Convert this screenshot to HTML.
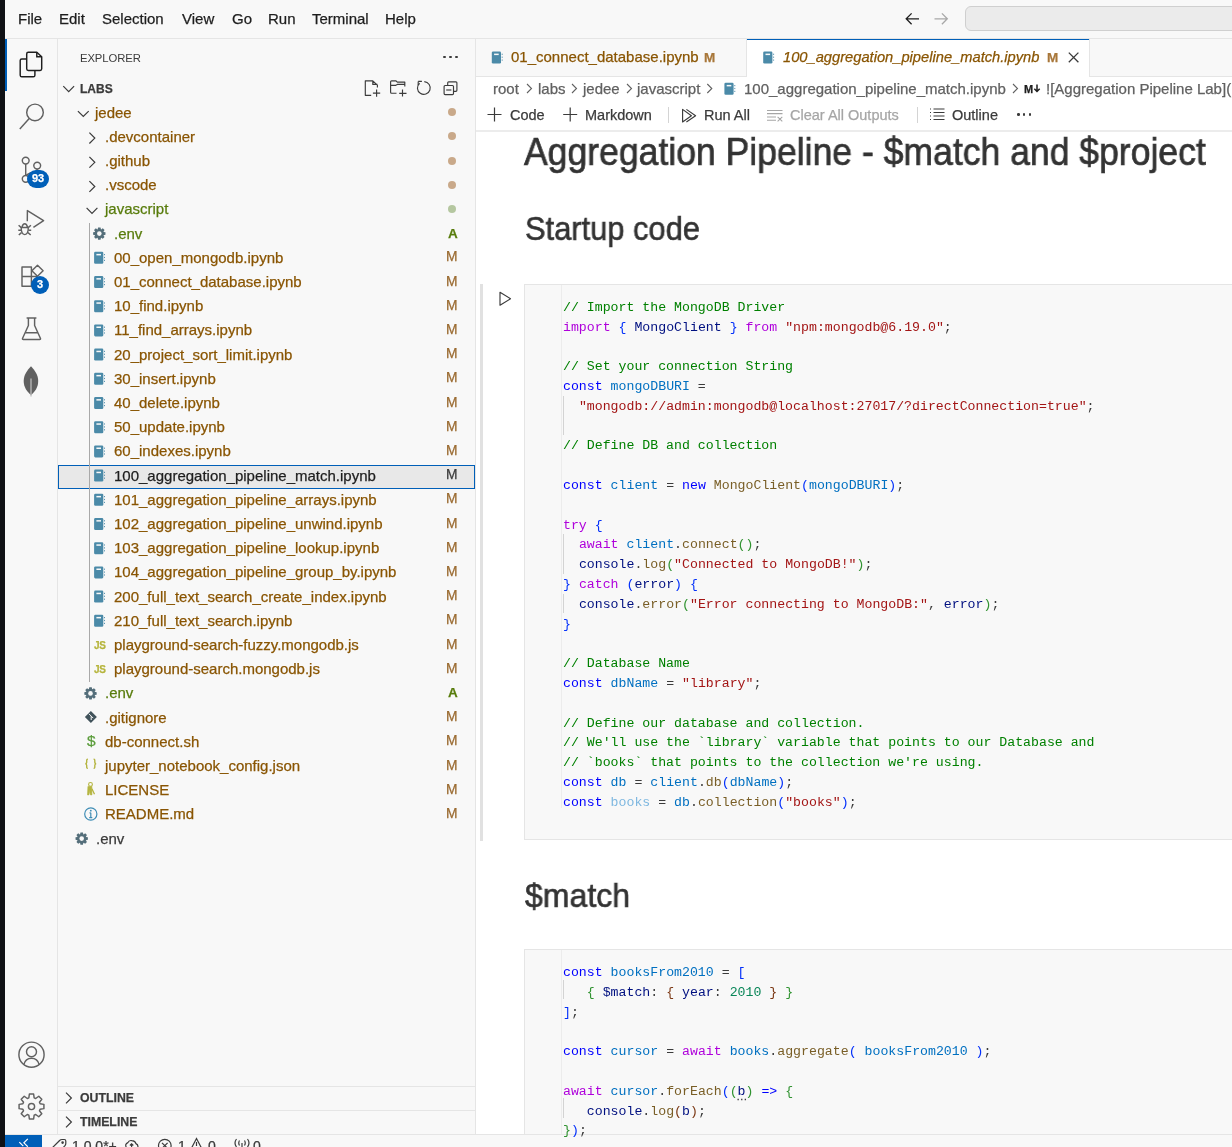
<!DOCTYPE html>
<html><head><meta charset="utf-8"><title>VS Code</title>
<style>
html,body{margin:0;padding:0;width:1232px;height:1147px;overflow:hidden;background:#fff;}
body{position:relative;font-family:'Liberation Sans', sans-serif;}
.r{position:absolute;}
.t{position:absolute;line-height:0;white-space:pre;will-change:transform;-webkit-text-stroke:0.25px currentColor;}
.m{-webkit-text-stroke:0;}
.ov{position:absolute;left:0;top:0;}
</style></head><body>

<div class="r" style="left:0px;top:0px;width:1232px;height:1147px;background:#ffffff;"></div>
<div class="r" style="left:0px;top:0px;width:1232px;height:38.5px;background:#f8f8f8;"></div>
<div class="r" style="left:0px;top:38px;width:1232px;height:1px;background:#e5e5e5;"></div>
<div class="r" style="left:0px;top:39px;width:57.5px;height:1095px;background:#f8f8f8;"></div>
<div class="r" style="left:57px;top:39px;width:1px;height:1095px;background:#e5e5e5;"></div>
<div class="r" style="left:58px;top:39px;width:417px;height:1095px;background:#f8f8f8;"></div>
<div class="r" style="left:475px;top:39px;width:1px;height:1095px;background:#e5e5e5;"></div>
<div class="r" style="left:0px;top:0px;width:5px;height:1147px;background:#0f1115;"></div>
<div class="t" style="left:18.00px;top:19.10px;font-size:15px;color:#1e1e1e;font-weight:normal;font-style:normal;font-family:'Liberation Sans', sans-serif;">File</div>
<div class="t" style="left:58.50px;top:19.10px;font-size:15px;color:#1e1e1e;font-weight:normal;font-style:normal;font-family:'Liberation Sans', sans-serif;">Edit</div>
<div class="t" style="left:102.00px;top:19.10px;font-size:15px;color:#1e1e1e;font-weight:normal;font-style:normal;font-family:'Liberation Sans', sans-serif;">Selection</div>
<div class="t" style="left:182.00px;top:19.10px;font-size:15px;color:#1e1e1e;font-weight:normal;font-style:normal;font-family:'Liberation Sans', sans-serif;">View</div>
<div class="t" style="left:231.50px;top:19.10px;font-size:15px;color:#1e1e1e;font-weight:normal;font-style:normal;font-family:'Liberation Sans', sans-serif;">Go</div>
<div class="t" style="left:267.80px;top:19.10px;font-size:15px;color:#1e1e1e;font-weight:normal;font-style:normal;font-family:'Liberation Sans', sans-serif;">Run</div>
<div class="t" style="left:312.00px;top:19.10px;font-size:15px;color:#1e1e1e;font-weight:normal;font-style:normal;font-family:'Liberation Sans', sans-serif;">Terminal</div>
<div class="t" style="left:385.20px;top:19.10px;font-size:15px;color:#1e1e1e;font-weight:normal;font-style:normal;font-family:'Liberation Sans', sans-serif;">Help</div>
<div class="r" style="left:964.5px;top:6.3px;width:300px;height:24.8px;background:#ebebeb;border:1px solid #cfcfcf;border-radius:6px;box-sizing:border-box;"></div>
<div class="r" style="left:5px;top:39px;width:2px;height:52px;background:#005fb8;"></div>
<div class="t" style="left:80.30px;top:58.08px;font-size:11.3px;color:#3b3b3b;font-weight:normal;font-style:normal;font-family:'Liberation Sans', sans-serif;-webkit-text-stroke:0;letter-spacing:-0.1px;">EXPLORER</div>
<div class="r" style="left:443.3px;top:55.8px;width:2.4px;height:2.4px;background:#3b3b3b;border-radius:1.2px;"></div>
<div class="r" style="left:449.3px;top:55.8px;width:2.4px;height:2.4px;background:#3b3b3b;border-radius:1.2px;"></div>
<div class="r" style="left:455.3px;top:55.8px;width:2.4px;height:2.4px;background:#3b3b3b;border-radius:1.2px;"></div>
<div class="t" style="left:80.30px;top:88.84px;font-size:12px;color:#3b3b3b;font-weight:bold;font-style:normal;font-family:'Liberation Sans', sans-serif;">LABS</div>
<div class="r" style="left:58px;top:464.5px;width:417px;height:24.2px;background:#e8e8e8;border:1px solid #005fb8;box-sizing:border-box;"></div>
<div class="r" style="left:89px;top:222.5px;width:1px;height:459.8px;background:#a9a9a9;"></div>
<div class="t" style="left:95.10px;top:112.60px;font-size:15px;color:#895503;font-weight:normal;font-style:normal;font-family:'Liberation Sans', sans-serif;">jedee</div>
<div class="r" style="left:447.5px;top:108.1px;width:8.2px;height:8.2px;background:#c9a98a;border-radius:4.1px;"></div>
<div class="t" style="left:104.50px;top:136.80px;font-size:15px;color:#895503;font-weight:normal;font-style:normal;font-family:'Liberation Sans', sans-serif;">.devcontainer</div>
<div class="r" style="left:447.5px;top:132.3px;width:8.2px;height:8.2px;background:#c9a98a;border-radius:4.1px;"></div>
<div class="t" style="left:104.50px;top:161.00px;font-size:15px;color:#895503;font-weight:normal;font-style:normal;font-family:'Liberation Sans', sans-serif;">.github</div>
<div class="r" style="left:447.5px;top:156.5px;width:8.2px;height:8.2px;background:#c9a98a;border-radius:4.1px;"></div>
<div class="t" style="left:104.50px;top:185.20px;font-size:15px;color:#895503;font-weight:normal;font-style:normal;font-family:'Liberation Sans', sans-serif;">.vscode</div>
<div class="r" style="left:447.5px;top:180.7px;width:8.2px;height:8.2px;background:#c9a98a;border-radius:4.1px;"></div>
<div class="t" style="left:104.50px;top:209.40px;font-size:15px;color:#587c0c;font-weight:normal;font-style:normal;font-family:'Liberation Sans', sans-serif;">javascript</div>
<div class="r" style="left:447.5px;top:204.9px;width:8.2px;height:8.2px;background:#b5c7a0;border-radius:4.1px;"></div>
<div class="t" style="left:113.90px;top:233.60px;font-size:15px;color:#587c0c;font-weight:normal;font-style:normal;font-family:'Liberation Sans', sans-serif;">.env</div>
<div class="t" style="left:447.60px;top:233.62px;font-size:13.5px;color:#587c0c;font-weight:bold;font-style:normal;font-family:'Liberation Sans', sans-serif;">A</div>
<div class="t" style="left:113.90px;top:257.80px;font-size:15px;color:#895503;font-weight:normal;font-style:normal;font-family:'Liberation Sans', sans-serif;">00_open_mongodb.ipynb</div>
<div class="t" style="left:445.80px;top:257.42px;font-size:13.8px;color:#9a6a30;font-weight:normal;font-style:normal;font-family:'Liberation Sans', sans-serif;">M</div>
<div class="t" style="left:113.90px;top:282.00px;font-size:15px;color:#895503;font-weight:normal;font-style:normal;font-family:'Liberation Sans', sans-serif;">01_connect_database.ipynb</div>
<div class="t" style="left:445.80px;top:281.62px;font-size:13.8px;color:#9a6a30;font-weight:normal;font-style:normal;font-family:'Liberation Sans', sans-serif;">M</div>
<div class="t" style="left:113.90px;top:306.20px;font-size:15px;color:#895503;font-weight:normal;font-style:normal;font-family:'Liberation Sans', sans-serif;">10_find.ipynb</div>
<div class="t" style="left:445.80px;top:305.82px;font-size:13.8px;color:#9a6a30;font-weight:normal;font-style:normal;font-family:'Liberation Sans', sans-serif;">M</div>
<div class="t" style="left:113.90px;top:330.40px;font-size:15px;color:#895503;font-weight:normal;font-style:normal;font-family:'Liberation Sans', sans-serif;">11_find_arrays.ipynb</div>
<div class="t" style="left:445.80px;top:330.02px;font-size:13.8px;color:#9a6a30;font-weight:normal;font-style:normal;font-family:'Liberation Sans', sans-serif;">M</div>
<div class="t" style="left:113.90px;top:354.60px;font-size:15px;color:#895503;font-weight:normal;font-style:normal;font-family:'Liberation Sans', sans-serif;">20_project_sort_limit.ipynb</div>
<div class="t" style="left:445.80px;top:354.22px;font-size:13.8px;color:#9a6a30;font-weight:normal;font-style:normal;font-family:'Liberation Sans', sans-serif;">M</div>
<div class="t" style="left:113.90px;top:378.80px;font-size:15px;color:#895503;font-weight:normal;font-style:normal;font-family:'Liberation Sans', sans-serif;">30_insert.ipynb</div>
<div class="t" style="left:445.80px;top:378.42px;font-size:13.8px;color:#9a6a30;font-weight:normal;font-style:normal;font-family:'Liberation Sans', sans-serif;">M</div>
<div class="t" style="left:113.90px;top:403.00px;font-size:15px;color:#895503;font-weight:normal;font-style:normal;font-family:'Liberation Sans', sans-serif;">40_delete.ipynb</div>
<div class="t" style="left:445.80px;top:402.62px;font-size:13.8px;color:#9a6a30;font-weight:normal;font-style:normal;font-family:'Liberation Sans', sans-serif;">M</div>
<div class="t" style="left:113.90px;top:427.20px;font-size:15px;color:#895503;font-weight:normal;font-style:normal;font-family:'Liberation Sans', sans-serif;">50_update.ipynb</div>
<div class="t" style="left:445.80px;top:426.82px;font-size:13.8px;color:#9a6a30;font-weight:normal;font-style:normal;font-family:'Liberation Sans', sans-serif;">M</div>
<div class="t" style="left:113.90px;top:451.40px;font-size:15px;color:#895503;font-weight:normal;font-style:normal;font-family:'Liberation Sans', sans-serif;">60_indexes.ipynb</div>
<div class="t" style="left:445.80px;top:451.02px;font-size:13.8px;color:#9a6a30;font-weight:normal;font-style:normal;font-family:'Liberation Sans', sans-serif;">M</div>
<div class="t" style="left:113.90px;top:475.60px;font-size:15px;color:#1e1e1e;font-weight:normal;font-style:normal;font-family:'Liberation Sans', sans-serif;">100_aggregation_pipeline_match.ipynb</div>
<div class="t" style="left:445.80px;top:475.22px;font-size:13.8px;color:#3b3b3b;font-weight:normal;font-style:normal;font-family:'Liberation Sans', sans-serif;">M</div>
<div class="t" style="left:113.90px;top:499.80px;font-size:15px;color:#895503;font-weight:normal;font-style:normal;font-family:'Liberation Sans', sans-serif;">101_aggregation_pipeline_arrays.ipynb</div>
<div class="t" style="left:445.80px;top:499.42px;font-size:13.8px;color:#9a6a30;font-weight:normal;font-style:normal;font-family:'Liberation Sans', sans-serif;">M</div>
<div class="t" style="left:113.90px;top:524.00px;font-size:15px;color:#895503;font-weight:normal;font-style:normal;font-family:'Liberation Sans', sans-serif;">102_aggregation_pipeline_unwind.ipynb</div>
<div class="t" style="left:445.80px;top:523.62px;font-size:13.8px;color:#9a6a30;font-weight:normal;font-style:normal;font-family:'Liberation Sans', sans-serif;">M</div>
<div class="t" style="left:113.90px;top:548.20px;font-size:15px;color:#895503;font-weight:normal;font-style:normal;font-family:'Liberation Sans', sans-serif;">103_aggregation_pipeline_lookup.ipynb</div>
<div class="t" style="left:445.80px;top:547.82px;font-size:13.8px;color:#9a6a30;font-weight:normal;font-style:normal;font-family:'Liberation Sans', sans-serif;">M</div>
<div class="t" style="left:113.90px;top:572.40px;font-size:15px;color:#895503;font-weight:normal;font-style:normal;font-family:'Liberation Sans', sans-serif;">104_aggregation_pipeline_group_by.ipynb</div>
<div class="t" style="left:445.80px;top:572.02px;font-size:13.8px;color:#9a6a30;font-weight:normal;font-style:normal;font-family:'Liberation Sans', sans-serif;">M</div>
<div class="t" style="left:113.90px;top:596.60px;font-size:15px;color:#895503;font-weight:normal;font-style:normal;font-family:'Liberation Sans', sans-serif;">200_full_text_search_create_index.ipynb</div>
<div class="t" style="left:445.80px;top:596.22px;font-size:13.8px;color:#9a6a30;font-weight:normal;font-style:normal;font-family:'Liberation Sans', sans-serif;">M</div>
<div class="t" style="left:113.90px;top:620.80px;font-size:15px;color:#895503;font-weight:normal;font-style:normal;font-family:'Liberation Sans', sans-serif;">210_full_text_search.ipynb</div>
<div class="t" style="left:445.80px;top:620.42px;font-size:13.8px;color:#9a6a30;font-weight:normal;font-style:normal;font-family:'Liberation Sans', sans-serif;">M</div>
<div class="t" style="left:93.5px;top:645.7px;font-size:10px;font-weight:bold;color:#b6b53e;font-family:'Liberation Sans', sans-serif;letter-spacing:-0.3px">JS</div>
<div class="t" style="left:113.90px;top:645.00px;font-size:15px;color:#895503;font-weight:normal;font-style:normal;font-family:'Liberation Sans', sans-serif;">playground-search-fuzzy.mongodb.js</div>
<div class="t" style="left:445.80px;top:644.62px;font-size:13.8px;color:#9a6a30;font-weight:normal;font-style:normal;font-family:'Liberation Sans', sans-serif;">M</div>
<div class="t" style="left:93.5px;top:669.9px;font-size:10px;font-weight:bold;color:#b6b53e;font-family:'Liberation Sans', sans-serif;letter-spacing:-0.3px">JS</div>
<div class="t" style="left:113.90px;top:669.20px;font-size:15px;color:#895503;font-weight:normal;font-style:normal;font-family:'Liberation Sans', sans-serif;">playground-search.mongodb.js</div>
<div class="t" style="left:445.80px;top:668.82px;font-size:13.8px;color:#9a6a30;font-weight:normal;font-style:normal;font-family:'Liberation Sans', sans-serif;">M</div>
<div class="t" style="left:104.50px;top:693.40px;font-size:15px;color:#587c0c;font-weight:normal;font-style:normal;font-family:'Liberation Sans', sans-serif;">.env</div>
<div class="t" style="left:447.60px;top:693.42px;font-size:13.5px;color:#587c0c;font-weight:bold;font-style:normal;font-family:'Liberation Sans', sans-serif;">A</div>
<div class="t" style="left:104.50px;top:717.60px;font-size:15px;color:#895503;font-weight:normal;font-style:normal;font-family:'Liberation Sans', sans-serif;">.gitignore</div>
<div class="t" style="left:445.80px;top:717.22px;font-size:13.8px;color:#9a6a30;font-weight:normal;font-style:normal;font-family:'Liberation Sans', sans-serif;">M</div>
<div class="t" style="left:87.20px;top:741.33px;font-size:15.5px;color:#5a9c3a;font-weight:normal;font-style:normal;font-family:'Liberation Sans', sans-serif;">$</div>
<div class="t" style="left:104.50px;top:741.80px;font-size:15px;color:#895503;font-weight:normal;font-style:normal;font-family:'Liberation Sans', sans-serif;">db-connect.sh</div>
<div class="t" style="left:445.80px;top:741.42px;font-size:13.8px;color:#9a6a30;font-weight:normal;font-style:normal;font-family:'Liberation Sans', sans-serif;">M</div>
<div class="t" style="left:104.50px;top:766.00px;font-size:15px;color:#895503;font-weight:normal;font-style:normal;font-family:'Liberation Sans', sans-serif;">jupyter_notebook_config.json</div>
<div class="t" style="left:445.80px;top:765.62px;font-size:13.8px;color:#9a6a30;font-weight:normal;font-style:normal;font-family:'Liberation Sans', sans-serif;">M</div>
<div class="t" style="left:104.50px;top:790.20px;font-size:15px;color:#895503;font-weight:normal;font-style:normal;font-family:'Liberation Sans', sans-serif;">LICENSE</div>
<div class="t" style="left:445.80px;top:789.82px;font-size:13.8px;color:#9a6a30;font-weight:normal;font-style:normal;font-family:'Liberation Sans', sans-serif;">M</div>
<div class="t" style="left:104.50px;top:814.40px;font-size:15px;color:#895503;font-weight:normal;font-style:normal;font-family:'Liberation Sans', sans-serif;">README.md</div>
<div class="t" style="left:445.80px;top:814.02px;font-size:13.8px;color:#9a6a30;font-weight:normal;font-style:normal;font-family:'Liberation Sans', sans-serif;">M</div>
<div class="t" style="left:96.00px;top:838.60px;font-size:15px;color:#3b3b3b;font-weight:normal;font-style:normal;font-family:'Liberation Sans', sans-serif;">.env</div>
<div class="r" style="left:58px;top:1086px;width:417px;height:1px;background:#e5e5e5;"></div>
<div class="r" style="left:58px;top:1110px;width:417px;height:1px;background:#e5e5e5;"></div>
<div class="t" style="left:80.40px;top:1097.94px;font-size:12.3px;color:#3b3b3b;font-weight:bold;font-style:normal;font-family:'Liberation Sans', sans-serif;">OUTLINE</div>
<div class="t" style="left:80.40px;top:1122.14px;font-size:12.3px;color:#3b3b3b;font-weight:bold;font-style:normal;font-family:'Liberation Sans', sans-serif;">TIMELINE</div>
<div class="r" style="left:476px;top:39px;width:756px;height:38px;background:#f8f8f8;"></div>
<div class="r" style="left:476px;top:76px;width:756px;height:1px;background:#e5e5e5;"></div>
<div class="r" style="left:476px;top:39px;width:270px;height:37px;background:#f8f8f8;"></div>
<div class="r" style="left:746px;top:39px;width:1px;height:38px;background:#e5e5e5;"></div>
<div class="r" style="left:747px;top:39px;width:342px;height:38px;background:#ffffff;"></div>
<div class="r" style="left:747px;top:39px;width:342px;height:1.2px;background:#005fb8;"></div>
<div class="r" style="left:1089px;top:39px;width:1px;height:38px;background:#e5e5e5;"></div>
<div class="t" style="left:511.40px;top:57.10px;font-size:15px;color:#895503;font-weight:normal;font-style:normal;font-family:'Liberation Sans', sans-serif;">01_connect_database.ipynb</div>
<div class="t" style="left:704.30px;top:57.62px;font-size:13.5px;color:#a8773a;font-weight:bold;font-style:normal;font-family:'Liberation Sans', sans-serif;">M</div>
<div class="t" style="left:783.20px;top:57.21px;font-size:14.7px;color:#895503;font-weight:normal;font-style:italic;font-family:'Liberation Sans', sans-serif;">100_aggregation_pipeline_match.ipynb</div>
<div class="t" style="left:1046.60px;top:57.62px;font-size:13.5px;color:#a8773a;font-weight:bold;font-style:normal;font-family:'Liberation Sans', sans-serif;">M</div>
<div class="t" style="left:493.30px;top:88.60px;font-size:15px;color:#616161;font-weight:normal;font-style:normal;font-family:'Liberation Sans', sans-serif;">root</div>
<div class="t" style="left:537.80px;top:88.60px;font-size:15px;color:#616161;font-weight:normal;font-style:normal;font-family:'Liberation Sans', sans-serif;">labs</div>
<div class="t" style="left:582.80px;top:88.60px;font-size:15px;color:#616161;font-weight:normal;font-style:normal;font-family:'Liberation Sans', sans-serif;">jedee</div>
<div class="t" style="left:636.50px;top:88.60px;font-size:15px;color:#616161;font-weight:normal;font-style:normal;font-family:'Liberation Sans', sans-serif;">javascript</div>
<div class="t" style="left:743.50px;top:88.60px;font-size:15px;color:#616161;font-weight:normal;font-style:normal;font-family:'Liberation Sans', sans-serif;">100_aggregation_pipeline_match.ipynb</div>
<div class="t" style="left:1024.00px;top:89.49px;font-size:11px;color:#1e1e1e;font-weight:bold;font-style:normal;font-family:'Liberation Sans', sans-serif;">M</div>
<div class="t" style="left:1045.50px;top:88.60px;font-size:15px;color:#616161;font-weight:normal;font-style:normal;font-family:'Liberation Sans', sans-serif;">![Aggregation Pipeline Lab](</div>
<div class="t" style="left:510.20px;top:114.98px;font-size:14.5px;color:#3b3b3b;font-weight:normal;font-style:normal;font-family:'Liberation Sans', sans-serif;">Code</div>
<div class="t" style="left:584.60px;top:114.98px;font-size:14.5px;color:#3b3b3b;font-weight:normal;font-style:normal;font-family:'Liberation Sans', sans-serif;">Markdown</div>
<div class="r" style="left:668px;top:107px;width:1px;height:16px;background:#d4d4d4;"></div>
<div class="t" style="left:703.50px;top:114.98px;font-size:14.5px;color:#3b3b3b;font-weight:normal;font-style:normal;font-family:'Liberation Sans', sans-serif;">Run All</div>
<div class="t" style="left:789.50px;top:114.98px;font-size:14.5px;color:#a6a6a6;font-weight:normal;font-style:normal;font-family:'Liberation Sans', sans-serif;">Clear All Outputs</div>
<div class="r" style="left:916.5px;top:107px;width:1px;height:16px;background:#d4d4d4;"></div>
<div class="t" style="left:952.20px;top:114.98px;font-size:14.5px;color:#3b3b3b;font-weight:normal;font-style:normal;font-family:'Liberation Sans', sans-serif;">Outline</div>
<div class="r" style="left:1017.3px;top:113.4px;width:2.4px;height:2.4px;background:#3b3b3b;border-radius:1.2px;"></div>
<div class="r" style="left:1023.0px;top:113.4px;width:2.4px;height:2.4px;background:#3b3b3b;border-radius:1.2px;"></div>
<div class="r" style="left:1028.7px;top:113.4px;width:2.4px;height:2.4px;background:#3b3b3b;border-radius:1.2px;"></div>
<div class="r" style="left:476px;top:130px;width:756px;height:1.5px;background:#ececec;"></div>
<div class="t" style="left:524.20px;top:151.93px;font-size:38px;color:#333333;font-weight:normal;font-style:normal;font-family:'Liberation Sans', sans-serif;transform:scaleX(0.9355);transform-origin:0 0;-webkit-text-stroke:0.7px currentColor;">Aggregation Pipeline - $match and $project</div>
<div class="t" style="left:524.50px;top:229.47px;font-size:33px;color:#333333;font-weight:normal;font-style:normal;font-family:'Liberation Sans', sans-serif;transform:scaleX(0.935);transform-origin:0 0;-webkit-text-stroke:0.6px currentColor;">Startup code</div>
<div class="t" style="left:524.80px;top:896.07px;font-size:33px;color:#333333;font-weight:normal;font-style:normal;font-family:'Liberation Sans', sans-serif;transform:scaleX(0.972);transform-origin:0 0;-webkit-text-stroke:0.6px currentColor;">$match</div>
<div class="r" style="left:524.4px;top:284px;width:720px;height:556px;background:#f8f8f8;border:1px solid #e5e5e5;box-sizing:border-box;"></div>
<div class="r" style="left:480px;top:284px;width:3px;height:557px;background:#e1e1e1;"></div>
<div class="r" style="left:561px;top:285px;width:1px;height:523px;background:#ececec;"></div>
<div class="r" style="left:524.4px;top:949px;width:720px;height:200px;background:#f8f8f8;border:1px solid #e5e5e5;box-sizing:border-box;"></div>
<div class="r" style="left:561px;top:950px;width:1px;height:190px;background:#ececec;"></div>
<div class="r" style="left:0px;top:1134px;width:1232px;height:13px;background:#f8f8f8;"></div>
<div class="r" style="left:0px;top:1134px;width:1232px;height:1px;background:#e5e5e5;"></div>
<div class="r" style="left:0px;top:1134px;width:5px;height:13px;background:#0f1115;"></div>
<div class="r" style="left:5px;top:1135px;width:37px;height:12px;background:#005fb8;"></div>
<div class="t" style="left:71.60px;top:1145.65px;font-size:14px;color:#3b3b3b;font-weight:normal;font-style:normal;font-family:'Liberation Sans', sans-serif;">1.0.0*+</div>
<div class="t" style="left:178.00px;top:1145.65px;font-size:14px;color:#3b3b3b;font-weight:normal;font-style:normal;font-family:'Liberation Sans', sans-serif;">1</div>
<div class="t" style="left:208.00px;top:1145.65px;font-size:14px;color:#3b3b3b;font-weight:normal;font-style:normal;font-family:'Liberation Sans', sans-serif;">0</div>
<div class="t" style="left:253.40px;top:1145.65px;font-size:14px;color:#3b3b3b;font-weight:normal;font-style:normal;font-family:'Liberation Sans', sans-serif;">0</div>
<div class="t m" style="left:562.70px;top:307.78px;font-size:13.23px;color:#3b3b3b;font-weight:normal;font-style:normal;font-family:'Liberation Mono', monospace;white-space:pre;"><span style="color:#008000">// Import the MongoDB Driver</span></div>
<div class="t m" style="left:562.70px;top:327.58px;font-size:13.23px;color:#3b3b3b;font-weight:normal;font-style:normal;font-family:'Liberation Mono', monospace;white-space:pre;"><span style="color:#af00db">import</span><span style="color:#3b3b3b"> </span><span style="color:#0431fa">{</span><span style="color:#3b3b3b"> </span><span style="color:#001080">MongoClient</span><span style="color:#3b3b3b"> </span><span style="color:#0431fa">}</span><span style="color:#3b3b3b"> </span><span style="color:#af00db">from</span><span style="color:#3b3b3b"> </span><span style="color:#a31515">&quot;npm:mongodb@6.19.0&quot;</span><span style="color:#3b3b3b">;</span></div>
<div class="t m" style="left:562.70px;top:367.18px;font-size:13.23px;color:#3b3b3b;font-weight:normal;font-style:normal;font-family:'Liberation Mono', monospace;white-space:pre;"><span style="color:#008000">// Set your connection String</span></div>
<div class="t m" style="left:562.70px;top:386.98px;font-size:13.23px;color:#3b3b3b;font-weight:normal;font-style:normal;font-family:'Liberation Mono', monospace;white-space:pre;"><span style="color:#0000ff">const</span><span style="color:#3b3b3b"> </span><span style="color:#0070c1">mongoDBURI</span><span style="color:#3b3b3b"> =</span></div>
<div class="t m" style="left:562.70px;top:406.78px;font-size:13.23px;color:#3b3b3b;font-weight:normal;font-style:normal;font-family:'Liberation Mono', monospace;white-space:pre;"><span style="color:#3b3b3b">  </span><span style="color:#a31515">&quot;mongodb://admin:mongodb@localhost:27017/?directConnection=true&quot;</span><span style="color:#3b3b3b">;</span></div>
<div class="t m" style="left:562.70px;top:446.38px;font-size:13.23px;color:#3b3b3b;font-weight:normal;font-style:normal;font-family:'Liberation Mono', monospace;white-space:pre;"><span style="color:#008000">// Define DB and collection</span></div>
<div class="t m" style="left:562.70px;top:485.98px;font-size:13.23px;color:#3b3b3b;font-weight:normal;font-style:normal;font-family:'Liberation Mono', monospace;white-space:pre;"><span style="color:#0000ff">const</span><span style="color:#3b3b3b"> </span><span style="color:#0070c1">client</span><span style="color:#3b3b3b"> = </span><span style="color:#0000ff">new</span><span style="color:#3b3b3b"> </span><span style="color:#795e26">MongoClient</span><span style="color:#0431fa">(</span><span style="color:#0070c1">mongoDBURI</span><span style="color:#0431fa">)</span><span style="color:#3b3b3b">;</span></div>
<div class="t m" style="left:562.70px;top:525.58px;font-size:13.23px;color:#3b3b3b;font-weight:normal;font-style:normal;font-family:'Liberation Mono', monospace;white-space:pre;"><span style="color:#af00db">try</span><span style="color:#3b3b3b"> </span><span style="color:#0431fa">{</span></div>
<div class="t m" style="left:562.70px;top:545.38px;font-size:13.23px;color:#3b3b3b;font-weight:normal;font-style:normal;font-family:'Liberation Mono', monospace;white-space:pre;"><span style="color:#3b3b3b">  </span><span style="color:#af00db">await</span><span style="color:#3b3b3b"> </span><span style="color:#0070c1">client</span><span style="color:#3b3b3b">.</span><span style="color:#795e26">connect</span><span style="color:#319331">()</span><span style="color:#3b3b3b">;</span></div>
<div class="t m" style="left:562.70px;top:565.18px;font-size:13.23px;color:#3b3b3b;font-weight:normal;font-style:normal;font-family:'Liberation Mono', monospace;white-space:pre;"><span style="color:#3b3b3b">  </span><span style="color:#001080">console</span><span style="color:#3b3b3b">.</span><span style="color:#795e26">log</span><span style="color:#319331">(</span><span style="color:#a31515">&quot;Connected to MongoDB!&quot;</span><span style="color:#319331">)</span><span style="color:#3b3b3b">;</span></div>
<div class="t m" style="left:562.70px;top:584.98px;font-size:13.23px;color:#3b3b3b;font-weight:normal;font-style:normal;font-family:'Liberation Mono', monospace;white-space:pre;"><span style="color:#0431fa">}</span><span style="color:#3b3b3b"> </span><span style="color:#af00db">catch</span><span style="color:#3b3b3b"> </span><span style="color:#0431fa">(</span><span style="color:#001080">error</span><span style="color:#0431fa">)</span><span style="color:#3b3b3b"> </span><span style="color:#0431fa">{</span></div>
<div class="t m" style="left:562.70px;top:604.78px;font-size:13.23px;color:#3b3b3b;font-weight:normal;font-style:normal;font-family:'Liberation Mono', monospace;white-space:pre;"><span style="color:#3b3b3b">  </span><span style="color:#001080">console</span><span style="color:#3b3b3b">.</span><span style="color:#795e26">error</span><span style="color:#319331">(</span><span style="color:#a31515">&quot;Error connecting to MongoDB:&quot;</span><span style="color:#3b3b3b">, </span><span style="color:#001080">error</span><span style="color:#319331">)</span><span style="color:#3b3b3b">;</span></div>
<div class="t m" style="left:562.70px;top:624.58px;font-size:13.23px;color:#3b3b3b;font-weight:normal;font-style:normal;font-family:'Liberation Mono', monospace;white-space:pre;"><span style="color:#0431fa">}</span></div>
<div class="t m" style="left:562.70px;top:664.18px;font-size:13.23px;color:#3b3b3b;font-weight:normal;font-style:normal;font-family:'Liberation Mono', monospace;white-space:pre;"><span style="color:#008000">// Database Name</span></div>
<div class="t m" style="left:562.70px;top:683.98px;font-size:13.23px;color:#3b3b3b;font-weight:normal;font-style:normal;font-family:'Liberation Mono', monospace;white-space:pre;"><span style="color:#0000ff">const</span><span style="color:#3b3b3b"> </span><span style="color:#0070c1">dbName</span><span style="color:#3b3b3b"> = </span><span style="color:#a31515">&quot;library&quot;</span><span style="color:#3b3b3b">;</span></div>
<div class="t m" style="left:562.70px;top:723.58px;font-size:13.23px;color:#3b3b3b;font-weight:normal;font-style:normal;font-family:'Liberation Mono', monospace;white-space:pre;"><span style="color:#008000">// Define our database and collection.</span></div>
<div class="t m" style="left:562.70px;top:743.38px;font-size:13.23px;color:#3b3b3b;font-weight:normal;font-style:normal;font-family:'Liberation Mono', monospace;white-space:pre;"><span style="color:#008000">// We&#x27;ll use the `library` variable that points to our Database and</span></div>
<div class="t m" style="left:562.70px;top:763.18px;font-size:13.23px;color:#3b3b3b;font-weight:normal;font-style:normal;font-family:'Liberation Mono', monospace;white-space:pre;"><span style="color:#008000">// `books` that points to the collection we&#x27;re using.</span></div>
<div class="t m" style="left:562.70px;top:782.98px;font-size:13.23px;color:#3b3b3b;font-weight:normal;font-style:normal;font-family:'Liberation Mono', monospace;white-space:pre;"><span style="color:#0000ff">const</span><span style="color:#3b3b3b"> </span><span style="color:#0070c1">db</span><span style="color:#3b3b3b"> = </span><span style="color:#0070c1">client</span><span style="color:#3b3b3b">.</span><span style="color:#795e26">db</span><span style="color:#0431fa">(</span><span style="color:#0070c1">dbName</span><span style="color:#0431fa">)</span><span style="color:#3b3b3b">;</span></div>
<div class="t m" style="left:562.70px;top:802.78px;font-size:13.23px;color:#3b3b3b;font-weight:normal;font-style:normal;font-family:'Liberation Mono', monospace;white-space:pre;"><span style="color:#0000ff">const</span><span style="color:#3b3b3b"> </span><span style="color:#7fb8e0">books</span><span style="color:#3b3b3b"> = </span><span style="color:#0070c1">db</span><span style="color:#3b3b3b">.</span><span style="color:#795e26">collection</span><span style="color:#0431fa">(</span><span style="color:#a31515">&quot;books&quot;</span><span style="color:#0431fa">)</span><span style="color:#3b3b3b">;</span></div>
<div class="t m" style="left:562.70px;top:972.98px;font-size:13.23px;color:#3b3b3b;font-weight:normal;font-style:normal;font-family:'Liberation Mono', monospace;white-space:pre;"><span style="color:#0000ff">const</span><span style="color:#3b3b3b"> </span><span style="color:#0070c1">booksFrom2010</span><span style="color:#3b3b3b"> = </span><span style="color:#0431fa">[</span></div>
<div class="t m" style="left:562.70px;top:992.78px;font-size:13.23px;color:#3b3b3b;font-weight:normal;font-style:normal;font-family:'Liberation Mono', monospace;white-space:pre;"><span style="color:#3b3b3b">   </span><span style="color:#319331">{</span><span style="color:#3b3b3b"> </span><span style="color:#001080">$match</span><span style="color:#3b3b3b">: </span><span style="color:#7b3814">{</span><span style="color:#3b3b3b"> </span><span style="color:#001080">year</span><span style="color:#3b3b3b">: </span><span style="color:#098658">2010</span><span style="color:#3b3b3b"> </span><span style="color:#7b3814">}</span><span style="color:#3b3b3b"> </span><span style="color:#319331">}</span></div>
<div class="t m" style="left:562.70px;top:1012.58px;font-size:13.23px;color:#3b3b3b;font-weight:normal;font-style:normal;font-family:'Liberation Mono', monospace;white-space:pre;"><span style="color:#0431fa">]</span><span style="color:#3b3b3b">;</span></div>
<div class="t m" style="left:562.70px;top:1052.18px;font-size:13.23px;color:#3b3b3b;font-weight:normal;font-style:normal;font-family:'Liberation Mono', monospace;white-space:pre;"><span style="color:#0000ff">const</span><span style="color:#3b3b3b"> </span><span style="color:#0070c1">cursor</span><span style="color:#3b3b3b"> = </span><span style="color:#af00db">await</span><span style="color:#3b3b3b"> </span><span style="color:#0070c1">books</span><span style="color:#3b3b3b">.</span><span style="color:#795e26">aggregate</span><span style="color:#0431fa">(</span><span style="color:#3b3b3b"> </span><span style="color:#0070c1">booksFrom2010</span><span style="color:#3b3b3b"> </span><span style="color:#0431fa">)</span><span style="color:#3b3b3b">;</span></div>
<div class="t m" style="left:562.70px;top:1091.78px;font-size:13.23px;color:#3b3b3b;font-weight:normal;font-style:normal;font-family:'Liberation Mono', monospace;white-space:pre;"><span style="color:#af00db">await</span><span style="color:#3b3b3b"> </span><span style="color:#0070c1">cursor</span><span style="color:#3b3b3b">.</span><span style="color:#795e26">forEach</span><span style="color:#0431fa">(</span><span style="color:#319331">(</span><span style="color:#001080">b</span><span style="color:#319331">)</span><span style="color:#3b3b3b"> </span><span style="color:#0000ff">=&gt;</span><span style="color:#3b3b3b"> </span><span style="color:#319331">{</span></div>
<div class="t m" style="left:562.70px;top:1111.58px;font-size:13.23px;color:#3b3b3b;font-weight:normal;font-style:normal;font-family:'Liberation Mono', monospace;white-space:pre;"><span style="color:#3b3b3b">   </span><span style="color:#001080">console</span><span style="color:#3b3b3b">.</span><span style="color:#795e26">log</span><span style="color:#7b3814">(</span><span style="color:#001080">b</span><span style="color:#7b3814">)</span><span style="color:#3b3b3b">;</span></div>
<div class="t m" style="left:562.70px;top:1131.38px;font-size:13.23px;color:#3b3b3b;font-weight:normal;font-style:normal;font-family:'Liberation Mono', monospace;white-space:pre;"><span style="color:#319331">}</span><span style="color:#0431fa">)</span><span style="color:#3b3b3b">;</span></div>
<div class="r" style="left:562.5px;top:395.5px;width:1px;height:39.6px;background:#d3d3d3;"></div>
<div class="r" style="left:562.5px;top:534.1px;width:1px;height:39.6px;background:#d3d3d3;"></div>
<div class="r" style="left:562.5px;top:593.5px;width:1px;height:19.8px;background:#d3d3d3;"></div>
<div class="r" style="left:562.5px;top:979.5px;width:1px;height:19.8px;background:#d3d3d3;"></div>
<div class="r" style="left:562.5px;top:1098.3px;width:1px;height:19.8px;background:#d3d3d3;"></div>
<svg class="ov" width="1232" height="1147" viewBox="0 0 1232 1147"><path d="M919 18.8H906.3M911.6 13.4L906.2 18.8L911.6 24.2" stroke="#1e1e1e" stroke-width="1.3" fill="none"/><path d="M934.5 18.8H947.2M941.9 13.4L947.3 18.8L941.9 24.2" stroke="#a8a8a8" stroke-width="1.3" fill="none"/><g stroke="#1e1e1e" stroke-width="1.45" fill="none" stroke-linejoin="round"><path d="M26.7 59H21.8Q20.2 59 20.2 60.6V75.2Q20.2 76.8 21.8 76.8H33.3Q34.9 76.8 34.9 75.2V70.4"/><path d="M28.3 52.3H36.8L41.7 56.8V68.8Q41.7 70.4 40.1 70.4H28.3Q26.7 70.4 26.7 68.8V53.9Q26.7 52.3 28.3 52.3Z"/><path d="M36.8 52.3V56.8H41.7" stroke-linejoin="miter"/></g><g stroke="#616161" stroke-width="1.45" fill="none"><circle cx="35" cy="112.4" r="8.3"/><path d="M29.2 118.4L19.8 129"/></g><g stroke="#616161" stroke-width="1.45" fill="none"><circle cx="25.7" cy="160.6" r="3.4"/><circle cx="37.2" cy="165.6" r="3.4"/><circle cx="25.7" cy="178.8" r="3.4"/><path d="M25.7 164V175.4"/><path d="M37.2 169Q37.2 171.5 33 172.5Q27.5 173.5 26.2 175.6"/></g><g stroke="#616161" stroke-width="1.45" fill="none" stroke-linejoin="round"><path d="M27.3 221.3L27.4 210.6L43.6 220.7L33.4 227.4"/><path d="M21.3 227.4H28.2C28.6 231.5 27.2 234.6 24.75 234.6C22.3 234.6 20.9 231.5 21.3 227.4Z"/><path d="M22 227.3Q22.8 223.7 24.75 223.7Q26.7 223.7 27.5 227.3"/><path d="M18.6 225.3L21.3 227.6M30.9 225.3L28.2 227.6M18.3 230.3H21M31.2 230.3H28.5M18.8 235L21.5 232.6M30.7 235L28 232.6"/></g><g stroke="#616161" stroke-width="1.45" fill="none" stroke-linejoin="round"><path d="M22 266.9H31.4V286.2H22ZM22 276.5H37M31.4 286.2H36"/><path d="M37.5 265.2L43.1 270.7L37.5 276.2L31.9 270.7Z"/></g><g stroke="#616161" stroke-width="1.45" fill="none" stroke-linejoin="round"><path d="M26.6 318H36.4M28.4 318V325.5L22.5 338.5Q22.2 339.5 23.4 339.5H39.6Q40.8 339.5 40.5 338.5L34.6 325.5V318M24.8 332.7H38.2"/></g><path d="M31 366.2C27.5 370 23.7 374.5 23.7 381C23.7 387.5 27 391.5 31 395C35 391.5 38.2 387.5 38.2 381C38.2 374.5 34.5 370 31 366.2Z" fill="#616161"/><path d="M31 378.6V396.5" stroke="#bdbdbd" stroke-width="1.3"/><g stroke="#616161" stroke-width="1.45" fill="none"><circle cx="31.5" cy="1054.7" r="12.6"/><circle cx="31.5" cy="1051.8" r="5"/><path d="M23.8 1064.6Q25.5 1058.3 31.5 1058.3Q37.5 1058.3 39.2 1064.6"/></g><path d="M40.10 1103.84 L43.92 1104.37 L43.92 1108.63 L40.10 1109.16 L39.46 1110.70 L41.79 1113.77 L38.77 1116.79 L35.70 1114.46 L34.16 1115.10 L33.63 1118.92 L29.37 1118.92 L28.84 1115.10 L27.30 1114.46 L24.23 1116.79 L21.21 1113.77 L23.54 1110.70 L22.90 1109.16 L19.08 1108.63 L19.08 1104.37 L22.90 1103.84 L23.54 1102.30 L21.21 1099.23 L24.23 1096.21 L27.30 1098.54 L28.84 1097.90 L29.37 1094.08 L33.63 1094.08 L34.16 1097.90 L35.70 1098.54 L38.77 1096.21 L41.79 1099.23 L39.46 1102.30Z" stroke="#616161" stroke-width="1.45" fill="none" stroke-linejoin="round"/><circle cx="31.5" cy="1106.5" r="3.1" stroke="#616161" stroke-width="1.45" fill="none"/><path d="M63.3 86.2L68.7 91.6L74.1 86.2" stroke="#3b3b3b" stroke-width="1.2" fill="none"/><g stroke="#3b3b3b" stroke-width="1.15" fill="none" stroke-linejoin="round"><path d="M371.2 95.3H365.3V80.8H372.8L377.4 85.2V87.5M372.8 80.8V84.4H377.4M376.6 89.4V96.7M372.9 93.1H380.2"/><path d="M396.5 93.2H391.6Q390.6 93.2 390.6 92.2V81.8Q390.6 80.8 391.6 80.8H395.8L397.3 82.1H404.8V86.5M390.6 85.3H395.8L397.3 84.4H404.8M402.5 89.4V96.5M399.2 93.3H406.5"/><path d="M419.6 83.2A6.4 6.4 0 1 0 424.3 81.6"/><path d="M418.2 81.4H421.9M418.2 81.4V85.1"/><path d="M447.7 85.4V82.8Q447.7 81.8 448.7 81.8H455.9Q456.9 81.8 456.9 82.8V90.3Q456.9 91.3 455.9 91.3H453.6"/><rect x="444.1" y="85.5" width="9.4" height="9.1" rx="1"/><path d="M446.2 90H451.4"/></g><path d="M77.9 111.1L83.3 116.5L88.7 111.1" stroke="#3b3b3b" stroke-width="1.2" fill="none"/><path d="M89.4 132.7L94.8 138.1L89.4 143.5" stroke="#3b3b3b" stroke-width="1.2" fill="none"/><path d="M89.4 156.9L94.8 162.3L89.4 167.7" stroke="#3b3b3b" stroke-width="1.2" fill="none"/><path d="M89.4 181.1L94.8 186.5L89.4 191.9" stroke="#3b3b3b" stroke-width="1.2" fill="none"/><path d="M86.6 207.9L92.0 213.3L97.4 207.9" stroke="#3b3b3b" stroke-width="1.2" fill="none"/><path d="M103.61 231.98 L105.47 232.35 L105.47 234.85 L103.61 235.22 L103.49 235.50 L104.55 237.08 L102.78 238.85 L101.20 237.79 L100.92 237.91 L100.55 239.77 L98.05 239.77 L97.68 237.91 L97.40 237.79 L95.82 238.85 L94.05 237.08 L95.11 235.50 L94.99 235.22 L93.13 234.85 L93.13 232.35 L94.99 231.98 L95.11 231.70 L94.05 230.12 L95.82 228.35 L97.40 229.41 L97.68 229.29 L98.05 227.43 L100.55 227.43 L100.92 229.29 L101.20 229.41 L102.78 228.35 L104.55 230.12 L103.49 231.70Z" fill="#546e7a"/><circle cx="99.30" cy="233.60" r="2.3" fill="#f8f8f8"/><rect x="94.1" y="251.8" width="9.2" height="12" rx="1.3" fill="#4b8aa8"/><rect x="96.4" y="253.9" width="4.6" height="1.5" fill="#f8f8f8"/><path d="M104.5 254.0V255.2M104.5 256.9V258.1M104.5 259.8V261.0" stroke="#4b8aa8" stroke-width="0.9"/><rect x="94.1" y="276.0" width="9.2" height="12" rx="1.3" fill="#4b8aa8"/><rect x="96.4" y="278.1" width="4.6" height="1.5" fill="#f8f8f8"/><path d="M104.5 278.2V279.4M104.5 281.1V282.3M104.5 284.0V285.2" stroke="#4b8aa8" stroke-width="0.9"/><rect x="94.1" y="300.2" width="9.2" height="12" rx="1.3" fill="#4b8aa8"/><rect x="96.4" y="302.3" width="4.6" height="1.5" fill="#f8f8f8"/><path d="M104.5 302.4V303.6M104.5 305.3V306.5M104.5 308.2V309.4" stroke="#4b8aa8" stroke-width="0.9"/><rect x="94.1" y="324.4" width="9.2" height="12" rx="1.3" fill="#4b8aa8"/><rect x="96.4" y="326.5" width="4.6" height="1.5" fill="#f8f8f8"/><path d="M104.5 326.6V327.8M104.5 329.5V330.7M104.5 332.4V333.6" stroke="#4b8aa8" stroke-width="0.9"/><rect x="94.1" y="348.6" width="9.2" height="12" rx="1.3" fill="#4b8aa8"/><rect x="96.4" y="350.7" width="4.6" height="1.5" fill="#f8f8f8"/><path d="M104.5 350.8V352.0M104.5 353.7V354.9M104.5 356.6V357.8" stroke="#4b8aa8" stroke-width="0.9"/><rect x="94.1" y="372.8" width="9.2" height="12" rx="1.3" fill="#4b8aa8"/><rect x="96.4" y="374.9" width="4.6" height="1.5" fill="#f8f8f8"/><path d="M104.5 375.0V376.2M104.5 377.9V379.1M104.5 380.8V382.0" stroke="#4b8aa8" stroke-width="0.9"/><rect x="94.1" y="397.0" width="9.2" height="12" rx="1.3" fill="#4b8aa8"/><rect x="96.4" y="399.1" width="4.6" height="1.5" fill="#f8f8f8"/><path d="M104.5 399.2V400.4M104.5 402.1V403.3M104.5 405.0V406.2" stroke="#4b8aa8" stroke-width="0.9"/><rect x="94.1" y="421.2" width="9.2" height="12" rx="1.3" fill="#4b8aa8"/><rect x="96.4" y="423.3" width="4.6" height="1.5" fill="#f8f8f8"/><path d="M104.5 423.4V424.6M104.5 426.3V427.5M104.5 429.2V430.4" stroke="#4b8aa8" stroke-width="0.9"/><rect x="94.1" y="445.4" width="9.2" height="12" rx="1.3" fill="#4b8aa8"/><rect x="96.4" y="447.5" width="4.6" height="1.5" fill="#f8f8f8"/><path d="M104.5 447.6V448.8M104.5 450.5V451.7M104.5 453.4V454.6" stroke="#4b8aa8" stroke-width="0.9"/><rect x="94.1" y="469.6" width="9.2" height="12" rx="1.3" fill="#4b8aa8"/><rect x="96.4" y="471.7" width="4.6" height="1.5" fill="#f8f8f8"/><path d="M104.5 471.8V473.0M104.5 474.7V475.9M104.5 477.6V478.8" stroke="#4b8aa8" stroke-width="0.9"/><rect x="94.1" y="493.8" width="9.2" height="12" rx="1.3" fill="#4b8aa8"/><rect x="96.4" y="495.9" width="4.6" height="1.5" fill="#f8f8f8"/><path d="M104.5 496.0V497.2M104.5 498.9V500.1M104.5 501.8V503.0" stroke="#4b8aa8" stroke-width="0.9"/><rect x="94.1" y="518.0" width="9.2" height="12" rx="1.3" fill="#4b8aa8"/><rect x="96.4" y="520.1" width="4.6" height="1.5" fill="#f8f8f8"/><path d="M104.5 520.2V521.4M104.5 523.1V524.3M104.5 526.0V527.2" stroke="#4b8aa8" stroke-width="0.9"/><rect x="94.1" y="542.2" width="9.2" height="12" rx="1.3" fill="#4b8aa8"/><rect x="96.4" y="544.3" width="4.6" height="1.5" fill="#f8f8f8"/><path d="M104.5 544.4V545.6M104.5 547.3V548.5M104.5 550.2V551.4" stroke="#4b8aa8" stroke-width="0.9"/><rect x="94.1" y="566.4" width="9.2" height="12" rx="1.3" fill="#4b8aa8"/><rect x="96.4" y="568.5" width="4.6" height="1.5" fill="#f8f8f8"/><path d="M104.5 568.6V569.8M104.5 571.5V572.7M104.5 574.4V575.6" stroke="#4b8aa8" stroke-width="0.9"/><rect x="94.1" y="590.6" width="9.2" height="12" rx="1.3" fill="#4b8aa8"/><rect x="96.4" y="592.7" width="4.6" height="1.5" fill="#f8f8f8"/><path d="M104.5 592.8V594.0M104.5 595.7V596.9M104.5 598.6V599.8" stroke="#4b8aa8" stroke-width="0.9"/><rect x="94.1" y="614.8" width="9.2" height="12" rx="1.3" fill="#4b8aa8"/><rect x="96.4" y="616.9" width="4.6" height="1.5" fill="#f8f8f8"/><path d="M104.5 617.0V618.2M104.5 619.9V621.1M104.5 622.8V624.0" stroke="#4b8aa8" stroke-width="0.9"/><path d="M94.81 691.78 L96.67 692.15 L96.67 694.65 L94.81 695.02 L94.69 695.30 L95.75 696.88 L93.98 698.65 L92.40 697.59 L92.12 697.71 L91.75 699.57 L89.25 699.57 L88.88 697.71 L88.60 697.59 L87.02 698.65 L85.25 696.88 L86.31 695.30 L86.19 695.02 L84.33 694.65 L84.33 692.15 L86.19 691.78 L86.31 691.50 L85.25 689.92 L87.02 688.15 L88.60 689.21 L88.88 689.09 L89.25 687.23 L91.75 687.23 L92.12 689.09 L92.40 689.21 L93.98 688.15 L95.75 689.92 L94.69 691.50Z" fill="#546e7a"/><circle cx="90.50" cy="693.40" r="2.3" fill="#f8f8f8"/><path d="M90.9 711.0L96.9 717.0L90.9 723.0L84.9 717.0Z" fill="#41535b"/><path d="M88.9 713.8L91.2 716.1V720.0M91.2 716.1L93.2 718.1" stroke="#f8f8f8" stroke-width="1" fill="none"/><path d="M87.90 759.20C86.50 759.20 86.70 760.40 86.70 762.00C86.70 763.20 86.30 763.80 85.30 763.80C86.30 763.80 86.70 764.40 86.70 765.60C86.70 767.20 86.50 768.40 87.90 768.40 M93.60 759.20C95.00 759.20 94.80 760.40 94.80 762.00C94.80 763.20 95.20 763.80 96.20 763.80C95.20 763.80 94.80 764.40 94.80 765.60C94.80 767.20 95.00 768.40 93.60 768.40" stroke="#b5b541" stroke-width="1.4" fill="none"/><g fill="#b5b541" stroke="#b5b541"><circle cx="90.5" cy="784.4" r="1.9" fill="none" stroke-width="1.1"/><path d="M87.9 786.5H91.9V794.9H90.5L89.9 792.7V789.7L88.9 794.9H87.5Z" stroke-width="0.6"/><path d="M91.9 788.7L94.5 794.3" stroke-width="1.3" fill="none"/></g><circle cx="90.8" cy="814.0" r="6.1" fill="none" stroke="#3f8db5" stroke-width="1.2"/><path d="M90.8 812.8V817.6M89.2 817.6H92.3M89.5 812.8H90.8" stroke="#3f8db5" stroke-width="1.2"/><circle cx="90.8" cy="810.7" r="0.9" fill="#3f8db5"/><path d="M86.01 836.98 L87.87 837.35 L87.87 839.85 L86.01 840.22 L85.89 840.50 L86.95 842.08 L85.18 843.85 L83.60 842.79 L83.32 842.91 L82.95 844.77 L80.45 844.77 L80.08 842.91 L79.80 842.79 L78.22 843.85 L76.45 842.08 L77.51 840.50 L77.39 840.22 L75.53 839.85 L75.53 837.35 L77.39 836.98 L77.51 836.70 L76.45 835.12 L78.22 833.35 L79.80 834.41 L80.08 834.29 L80.45 832.43 L82.95 832.43 L83.32 834.29 L83.60 834.41 L85.18 833.35 L86.95 835.12 L85.89 836.70Z" fill="#546e7a"/><circle cx="81.70" cy="838.60" r="2.3" fill="#f8f8f8"/><path d="M66.0 1092.6L71.4 1098.0L66.0 1103.4" stroke="#3b3b3b" stroke-width="1.2" fill="none"/><path d="M66.0 1116.6L71.4 1122.0L66.0 1127.4" stroke="#3b3b3b" stroke-width="1.2" fill="none"/><rect x="491.8" y="51.5" width="9.2" height="12" rx="1.3" fill="#4b8aa8"/><rect x="494.1" y="53.6" width="4.6" height="1.5" fill="#f8f8f8"/><path d="M502.2 53.7V54.9M502.2 56.6V57.8M502.2 59.5V60.7" stroke="#4b8aa8" stroke-width="0.9"/><rect x="763.2" y="51.5" width="9.2" height="12" rx="1.3" fill="#4b8aa8"/><rect x="765.5" y="53.6" width="4.6" height="1.5" fill="#f8f8f8"/><path d="M773.6 53.7V54.9M773.6 56.6V57.8M773.6 59.5V60.7" stroke="#4b8aa8" stroke-width="0.9"/><path d="M1068.8 52.6L1078.4 62.2M1078.4 52.6L1068.8 62.2" stroke="#3b3b3b" stroke-width="1.3"/><path d="M527.0 84L531.5 88.5L527.0 93" stroke="#616161" stroke-width="1.1" fill="none"/><path d="M572.0 84L576.5 88.5L572.0 93" stroke="#616161" stroke-width="1.1" fill="none"/><path d="M627.0 84L631.5 88.5L627.0 93" stroke="#616161" stroke-width="1.1" fill="none"/><path d="M707.3 84L711.8 88.5L707.3 93" stroke="#616161" stroke-width="1.1" fill="none"/><rect x="724.4" y="82.8" width="9.2" height="12" rx="1.3" fill="#4b8aa8"/><rect x="726.7" y="84.9" width="4.6" height="1.5" fill="#f8f8f8"/><path d="M734.8 85.0V86.2M734.8 87.9V89.1M734.8 90.8V92.0" stroke="#4b8aa8" stroke-width="0.9"/><path d="M1013 84L1017.5 88.5L1013 93" stroke="#616161" stroke-width="1.1" fill="none"/><path d="M1037 84.5V91.5M1034.3 88.8L1037 91.5L1039.7 88.8" stroke="#1e1e1e" stroke-width="1.5" fill="none"/><path d="M494.5 107.5V121.5M487.5 114.5H501.5" stroke="#3b3b3b" stroke-width="1.2"/><path d="M570.2 107.5V121.5M563.2 114.5H577.2" stroke="#3b3b3b" stroke-width="1.2"/><g stroke="#3b3b3b" stroke-width="1.15" fill="none" stroke-linejoin="round"><path d="M682.6 109.4V122L691.4 115.7Z"/><path d="M686.4 109.4L695.6 115.7L686.4 122"/></g><g stroke="#a6a6a6" stroke-width="1.1" fill="none"><path d="M767 110.5H782.5M767 113.6H782.5M767 117H776M767 120.3H776M777.6 116.9L782.3 121.3M782.3 116.9L777.6 121.3"/></g><g stroke="#3b3b3b" stroke-width="1.15" fill="none"><path d="M933.5 109H944.5M933.5 112.5H944.5M933.5 116H944.5M933.5 119.5H944.5M930 109H931M930 112.5H931M930 116H931M930 119.5H931"/></g><path d="M500 292.3V305.2L510.5 298.75Z" stroke="#3b3b3b" stroke-width="1.15" fill="none" stroke-linejoin="round"/><path d="M27.8 1138.8L23.9 1142.8L27.8 1146.7M19.3 1142.2L23.3 1146.2" stroke="#ffffff" stroke-width="1.2" fill="none"/><g stroke="#3b3b3b" stroke-width="1.2" fill="none"><path d="M52.3 1147.8L59.6 1140.5Q60.6 1139.5 62 1139.5H64.3Q65.8 1139.5 65.8 1141V1143.4Q65.8 1144.8 64.8 1145.8L63.5 1147.1"/><circle cx="62.6" cy="1142.6" r="0.7"/><path d="M126.3 1147.5Q124.6 1144 127.9 1142.6Q128.9 1140 131.8 1140.6Q135.3 1140.8 135.9 1143.6Q138.5 1144.6 137.8 1147.5M131.6 1147.5V1143.8M129.9 1145.5L131.6 1143.8L133.3 1145.5"/><circle cx="164.8" cy="1145.6" r="6.3"/><path d="M162 1142.8L167.6 1148.4M167.6 1142.8L162 1148.4"/><path d="M196.5 1138.5L190.5 1150H202.5Z"/><path d="M196.5 1142V1146"/><path d="M236.5 1139Q233.5 1143 236.5 1147M239.5 1140.5Q238 1143 239.5 1145.5M247.5 1139Q250.5 1143 247.5 1147M244.5 1140.5Q246 1143 244.5 1145.5M242 1143V1150"/></g><path d="M737.5 1099.5H747" stroke="#3b3b3b" stroke-width="1.3" stroke-dasharray="1.3 2.3"/></svg>
<div class="r" style="left:27px;top:169.8px;width:22.2px;height:18.1px;background:#005fb8;border-radius:9px;"></div>
<div class="t" style="left:31.6px;top:178.39px;font-size:11px;color:#fff;font-weight:bold;">93</div>
<div class="r" style="left:31.1px;top:275.9px;width:18px;height:18px;background:#005fb8;border-radius:9px;"></div>
<div class="t" style="left:37.1px;top:284.19px;font-size:11px;color:#fff;font-weight:bold;">3</div>
</body></html>
